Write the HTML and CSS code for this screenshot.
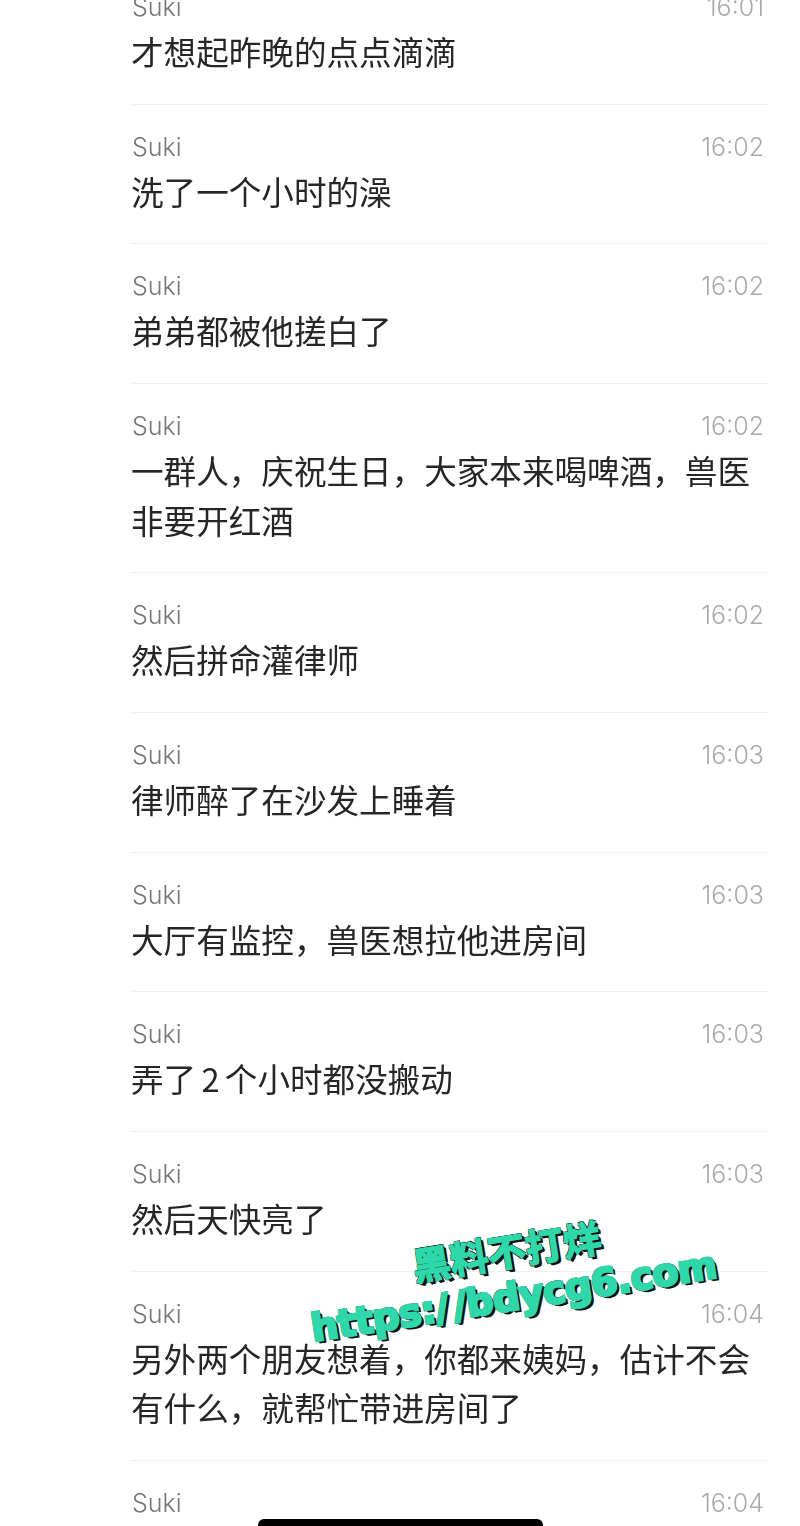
FILE: index.html
```html
<!DOCTYPE html>
<html lang="zh-CN">
<head>
    <meta charset="UTF-8">
    <meta name="viewport" content="width=device-width, initial-scale=1.0">
    <title>Suki</title>
    <link rel="stylesheet" href="styles.css">
</head>
<body>
    <div class="screen">
        <ul class="msg-list">
            <li class="msg">
                <div class="msg-meta"><span class="msg-name">Suki</span><span class="msg-time">16:01</span></div>
                <div class="msg-text">才想起昨晚的点点滴滴</div>
            </li>
            <li class="msg">
                <div class="msg-meta"><span class="msg-name">Suki</span><span class="msg-time">16:02</span></div>
                <div class="msg-text">洗了一个小时的澡</div>
            </li>
            <li class="msg">
                <div class="msg-meta"><span class="msg-name">Suki</span><span class="msg-time">16:02</span></div>
                <div class="msg-text">弟弟都被他搓白了</div>
            </li>
            <li class="msg">
                <div class="msg-meta"><span class="msg-name">Suki</span><span class="msg-time">16:02</span></div>
                <div class="msg-text">一群人，庆祝生日，大家本来喝啤酒，兽医非要开红酒</div>
            </li>
            <li class="msg">
                <div class="msg-meta"><span class="msg-name">Suki</span><span class="msg-time">16:02</span></div>
                <div class="msg-text">然后拼命灌律师</div>
            </li>
            <li class="msg">
                <div class="msg-meta"><span class="msg-name">Suki</span><span class="msg-time">16:03</span></div>
                <div class="msg-text">律师醉了在沙发上睡着</div>
            </li>
            <li class="msg">
                <div class="msg-meta"><span class="msg-name">Suki</span><span class="msg-time">16:03</span></div>
                <div class="msg-text">大厅有监控，兽医想拉他进房间</div>
            </li>
            <li class="msg">
                <div class="msg-meta"><span class="msg-name">Suki</span><span class="msg-time">16:03</span></div>
                <div class="msg-text tight">弄了 2 个小时都没搬动</div>
            </li>
            <li class="msg">
                <div class="msg-meta"><span class="msg-name">Suki</span><span class="msg-time">16:03</span></div>
                <div class="msg-text">然后天快亮了</div>
            </li>
            <li class="msg">
                <div class="msg-meta"><span class="msg-name">Suki</span><span class="msg-time">16:04</span></div>
                <div class="msg-text">另外两个朋友想着，你都来姨妈，估计不会有什么，就帮忙带进房间了</div>
            </li>
            <li class="msg">
                <div class="msg-meta"><span class="msg-name">Suki</span><span class="msg-time">16:04</span></div>
            </li>
        </ul>

        <div class="watermark">
            <div class="watermark-cn">黑料不打烊</div>
            <div class="watermark-url">https:/ /bdycg6.com</div>
        </div>

        <div class="home-bar"></div>
    </div>
</body>
</html>
```

FILE: styles.css
```css
html, body {
    margin: 0;
    padding: 0;
    background-color: #fff;
}
.screen {
    position: relative;
    width: 800px;
    height: 1526px;
    overflow: hidden;
    font-family: 'Inter', 'Noto Sans CJK SC', sans-serif;
}
.msg-list {
    list-style: none;
    margin: -35px 33px 0 130px;
    padding: 0;
    filter: blur(0.4px);
}
.msg {
    padding: 25px 2px 28.2px 1px;
    border-bottom: 1px solid #efefef;
}
.msg-meta {
    display: flex;
    justify-content: space-between;
    align-items: center;
    height: 34px;
    padding-left: 1px;
    padding-right: 1px;
    font-size: 25px;
    font-weight: 300;
}
.msg-name {
    color: #777;
}
.msg-time {
    color: #aaa;
}
.msg-text {
    margin-top: 2px;
    font-family: 'Noto Sans CJK SC', sans-serif;
    font-size: 32.6px;
    line-height: 49.5px;
    color: #262626;
}
.tight {
    word-spacing: -2px;
}
.watermark {
    position: absolute;
    left: 295px;
    top: 1226px;
    width: 430px;
    transform: rotate(-9deg);
    text-align: center;
    color: #2ed8ab;
    font-family: 'DejaVu Sans', 'Noto Sans CJK SC', sans-serif;
    font-weight: bold;
    -webkit-text-stroke: 2.5px #2ed8ab;
    text-shadow: 3px 3px 0 #111, 2px 2px 0 #111, -1px 1px 0 #111, 1px -1px 0 #111, -1px -1px 0 #111;
}
.watermark-cn {
    font-family: 'Noto Sans CJK SC', sans-serif;
    font-weight: 700;
    font-size: 38px;
    line-height: 48px;
    -webkit-text-stroke-width: 1.5px;
}
.watermark-url {
    font-size: 38px;
    line-height: 46px;
    letter-spacing: -0.5px;
    word-spacing: -8px;
    white-space: nowrap;
}
.home-bar {
    position: absolute;
    left: 258px;
    top: 1519px;
    width: 285px;
    height: 20px;
    background-color: #000;
    border-radius: 6px;
}
```
